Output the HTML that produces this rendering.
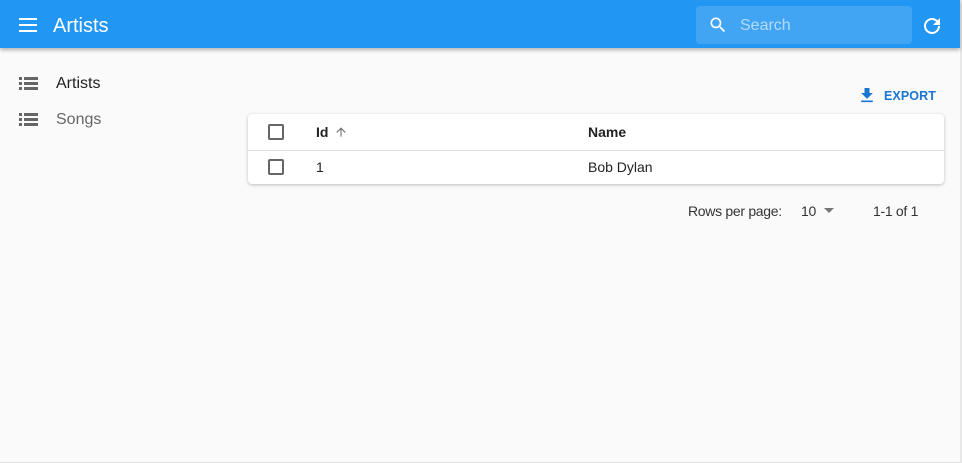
<!DOCTYPE html>
<html><head><style>
*{box-sizing:border-box;margin:0;padding:0}
body{width:962px;height:463px;background:#fafafa;font-family:"Liberation Sans",sans-serif;position:relative;overflow:hidden;border-right:2px solid #e8e8e8;border-bottom:1px solid #e0e0e0}
.bar{position:absolute;left:0;top:0;width:960px;height:48px;background:#2196f3;box-shadow:0 2px 4px rgba(0,0,0,.3)}
.t{position:absolute;color:#fff;font-size:20px;left:53px;top:15px}
.search{position:absolute;left:696px;top:6px;width:216px;height:38px;background:rgba(255,255,255,.15);border-radius:4px}
.search span{position:absolute;left:44px;top:11px;color:rgba(255,255,255,.6);font-size:16px}
.nav{position:absolute;left:56px;font-size:16px}
.card{position:absolute;left:248px;top:114px;width:696px;height:70px;background:#fff;border-radius:4px;box-shadow:0 1px 3px rgba(0,0,0,.25)}
.row{position:absolute;left:0;width:696px;font-size:14px;color:#222}
.cb{position:absolute;left:20px;width:16px;height:16px;border:2px solid #666;border-radius:2px}
.c1{position:absolute;left:68px}
.c2{position:absolute;left:340px}
.small{position:absolute;font-size:14px;color:#333;letter-spacing:-.3px}
</style></head><body>
<div class="bar">
<svg style="position:absolute;left:18px;top:16px" width="20" height="18"><path d="M1 3h18M1 9h18M1 15h18" stroke="#fff" stroke-width="2"/></svg>
<div class="t">Artists</div>
<div class="search"><svg style="position:absolute;left:12px;top:9px" width="20" height="20" viewBox="0 0 24 24"><path fill="#fff" d="M15.5 14h-.79l-.28-.27A6.47 6.47 0 0016 9.5 6.5 6.5 0 109.5 16c1.61 0 3.09-.59 4.23-1.57l.27.28v.79l5 4.99L20.49 19l-4.99-5zm-6 0C7.01 14 5 11.99 5 9.5S7.01 5 9.5 5 14 7.01 14 9.5 11.99 14 9.5 14z"/></svg><span>Search</span></div>
<svg style="position:absolute;left:920px;top:14px" width="24" height="24" viewBox="0 0 24 24"><path fill="#fff" d="M17.65 6.35A7.96 7.96 0 0012 4a8 8 0 108 8h-2a6 6 0 11-1.76-4.24L13 11h7V4l-2.35 2.35z"/></svg>
</div>
<svg style="position:absolute;left:19px;top:77px" width="19" height="14"><path fill="#666" d="M0 0h3v3H0zM5 0h14v3H5zM0 5h3v3H0zM5 5h14v3H5zM0 10h3v3H0zM5 10h14v3H5z"/></svg>
<div class="nav" style="top:75px;color:#222">Artists</div>
<svg style="position:absolute;left:19px;top:113px" width="19" height="14"><path fill="#666" d="M0 0h3v3H0zM5 0h14v3H5zM0 5h3v3H0zM5 5h14v3H5zM0 10h3v3H0zM5 10h14v3H5z"/></svg>
<div class="nav" style="top:111px;color:#666">Songs</div>
<svg style="position:absolute;left:860px;top:88px" width="14" height="15" viewBox="5 3 14 18"><path fill="#1976d2" d="M19 9h-4V3H9v6H5l7 7 7-7zM5 18v2h14v-2H5z"/></svg>
<div class="small" style="left:884px;top:89px;font-size:12.5px;color:#1976d2;font-weight:bold;letter-spacing:.1px">EXPORT</div>
<div class="card">
<div class="row" style="top:0;height:37px;border-bottom:1px solid #e0e0e0;font-weight:bold"><div class="cb" style="top:10px"></div><div class="c1" style="top:10px">Id <svg style="vertical-align:-2px;margin-left:2px" width="14" height="14" viewBox="0 0 24 24"><path fill="#777" d="M4 12l1.41 1.41L11 7.83V20h2V7.83l5.58 5.59L20 12l-8-8-8 8z"/></svg></div><div class="c2" style="top:10px">Name</div></div>
<div class="row" style="top:37px;height:33px"><div class="cb" style="top:8px"></div><div class="c1" style="top:8px">1</div><div class="c2" style="top:8px">Bob Dylan</div></div>
</div>
<div class="small" style="left:688px;top:203px">Rows per page:</div>
<div class="small" style="left:801px;top:203px">10</div>
<svg style="position:absolute;left:824px;top:208px" width="10" height="5"><path d="M0 0h10L5 5z" fill="#777"/></svg>
<div class="small" style="left:873px;top:203px">1-1 of 1</div>
</body></html>
